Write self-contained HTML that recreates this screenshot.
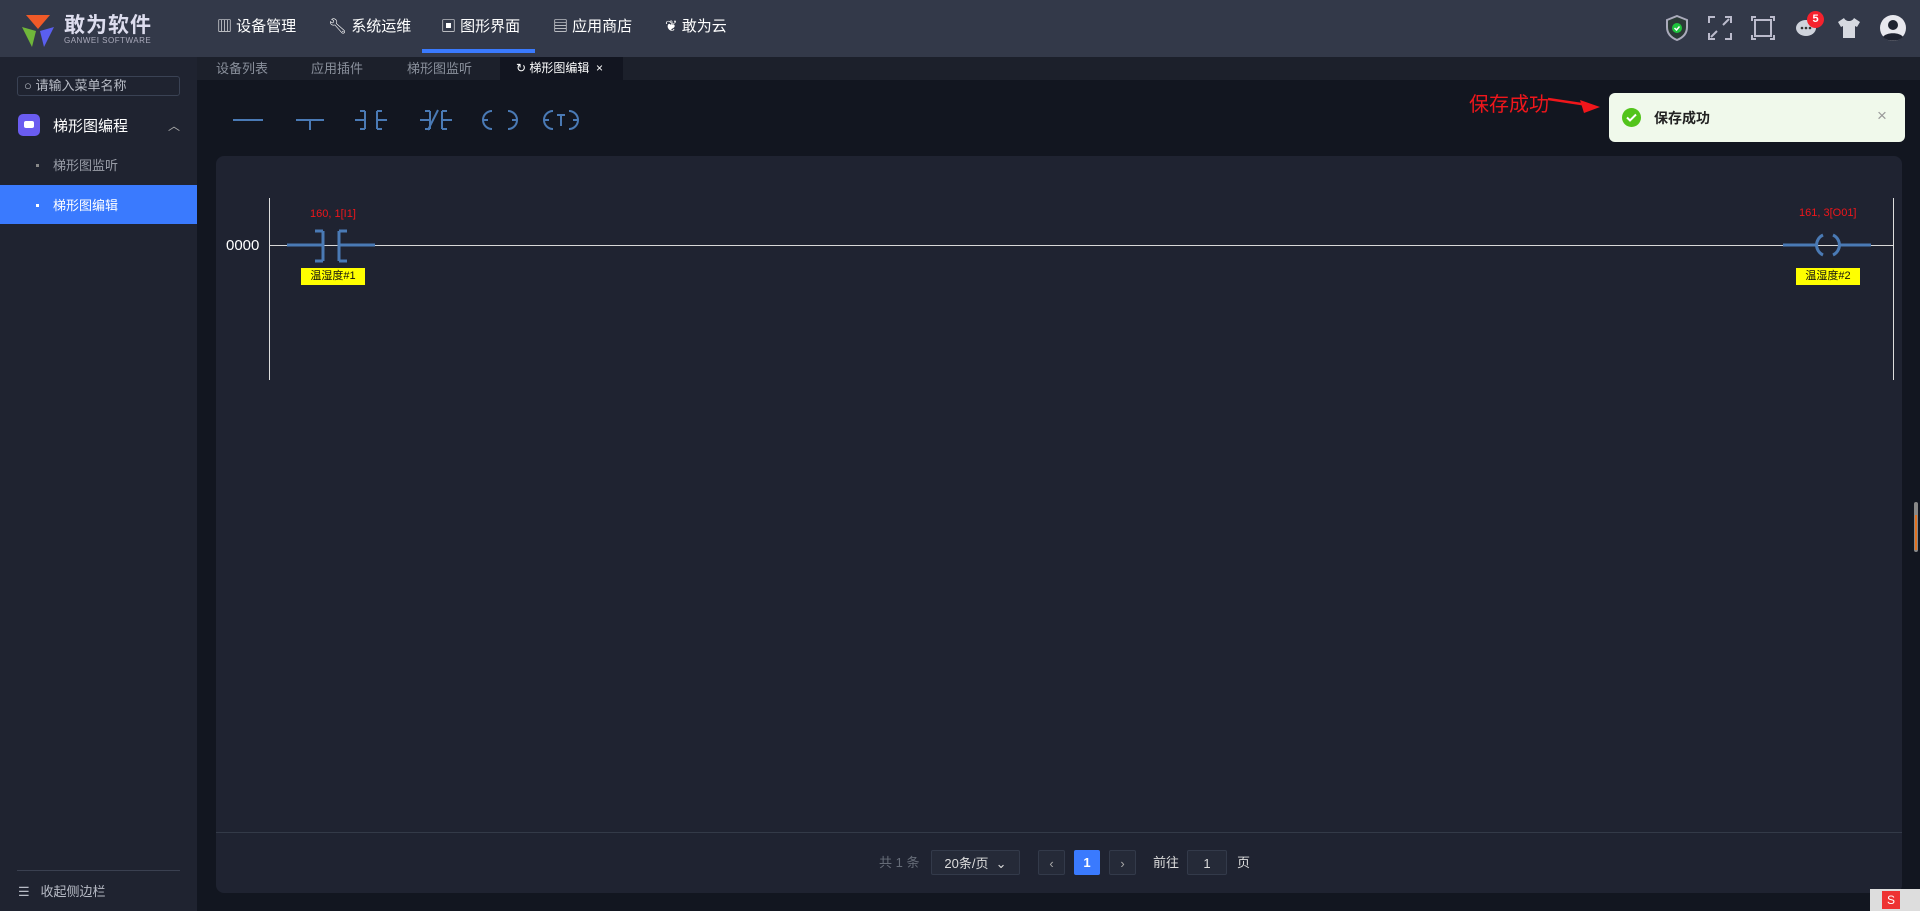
<!DOCTYPE html>
<html><head><meta charset="utf-8"><style>
*{margin:0;padding:0;box-sizing:border-box}
body{width:1920px;height:911px;overflow:hidden;background:#121620;font-family:"Liberation Sans","Noto Sans CJK SC",sans-serif;position:relative;color:#e6e8ee}
.abs{position:absolute}
.top{left:0;top:0;width:1920px;height:57px;background:#333949}
.nav{top:0;height:57px;line-height:53px;font-size:15px;color:#fff}
.side{left:0;top:57px;width:197px;height:854px;background:#1f2330}
.tabs{left:197px;top:57px;width:1723px;height:23px;background:#1c202b}
.tab{top:57px;height:23px;line-height:23px;font-size:13px;color:#8a909c}
.panel{left:216px;top:156px;width:1686px;height:737px;background:#1f2331;border-radius:8px}
.lbl{font-size:11px;color:#f0161b}
.yl{background:#ffff00;color:#111;font-size:11px;text-align:center;height:17px;line-height:17px}
.pg{top:850px;height:25px;line-height:25px;font-size:13px}
.btn{border:1px solid #333a4a;background:#252a38;border-radius:2px;text-align:center;color:#aaa}
</style></head><body>
<div class="abs top"></div>
<svg class="abs" style="left:20px;top:13px" width="36" height="34" viewBox="0 0 36 34"><path d="M6 2h24l-12 14z" fill="#f05a28"/><path d="M2 14l14 4-4 16z" fill="#6fb63a"/><path d="M34 14l-14 4 4 16z" fill="#5a5ff0"/></svg>
<div class="abs" style="left:64px;top:9px;font-size:21px;font-weight:bold;color:#dde;letter-spacing:1px">敢为软件</div>
<div class="abs" style="left:64px;top:36px;font-size:8px;color:#aab;letter-spacing:0.5px">GANWEI SOFTWARE</div>
<div class="abs nav" style="left:217px">▥ 设备管理</div>
<div class="abs nav" style="left:328px">🔧︎ 系统运维</div>
<div class="abs nav" style="left:441px">▣ 图形界面</div>
<div class="abs" style="left:422px;top:49px;width:113px;height:4px;background:#3a7afe"></div>
<div class="abs nav" style="left:553px">▤ 应用商店</div>
<div class="abs nav" style="left:665px">❦ 敢为云</div>
<svg class="abs" style="left:1665px;top:15px" width="24" height="26" viewBox="0 0 24 26"><path d="M12 1l10 4v7c0 7-5 11-10 13C7 23 2 19 2 12V5z" fill="#2b3a36" stroke="#aab" stroke-width="2"/><circle cx="12" cy="13" r="5" fill="#1ec43c"/><path d="M9.5 13l2 2 3-3.5" stroke="#fff" stroke-width="1.5" fill="none"/></svg>
<svg class="abs" style="left:1708px;top:16px" width="24" height="24" viewBox="0 0 24 24" stroke="#bbc" stroke-width="2" fill="none"><path d="M1 7V1h6M17 1h6v6M23 17v6h-6M7 23H1v-6M3 21l6-6M21 3l-6 6"/></svg>
<svg class="abs" style="left:1751px;top:16px" width="24" height="24" viewBox="0 0 24 24" stroke="#bbc" stroke-width="2" fill="none"><rect x="4" y="4" width="16" height="16"/><path d="M1 5V1h4M19 1h4v4M23 19v4h-4M5 23H1v-4"/></svg>
<svg class="abs" style="left:1795px;top:17px" width="24" height="22" viewBox="0 0 24 22"><ellipse cx="11" cy="11" rx="10" ry="8" fill="#cfd3dc"/><circle cx="7" cy="11" r="1.3" fill="#333"/><circle cx="11" cy="11" r="1.3" fill="#333"/><circle cx="15" cy="11" r="1.3" fill="#333"/></svg>
<div class="abs" style="left:1807px;top:11px;width:17px;height:17px;border-radius:50%;background:#f5222d;color:#fff;font-size:11px;text-align:center;line-height:17px;font-weight:bold">5</div>
<svg class="abs" style="left:1837px;top:17px" width="24" height="22" viewBox="0 0 24 22"><path d="M7 1l-6 4 3 5 2-1v12h12V9l2 1 3-5-6-4c-1 2-3 3-5 3S8 3 7 1z" fill="#d6d9e0"/></svg>
<svg class="abs" style="left:1880px;top:15px" width="26" height="26" viewBox="0 0 26 26"><circle cx="13" cy="13" r="13" fill="#e8e8ee"/><circle cx="13" cy="10" r="5" fill="#1f2330"/><path d="M3 22c3-5 17-5 20 0-5 5-15 5-20 0z" fill="#1f2330"/></svg>

<div class="abs side"></div>
<div class="abs" style="left:17px;top:76px;width:163px;height:20px;border:1px solid #3a4254;border-radius:3px;font-size:13px;color:#b8bcc6;line-height:18px;padding-left:6px">○ 请输入菜单名称</div>
<div class="abs" style="left:18px;top:114px;width:22px;height:22px;background:#6a5cf0;border-radius:5px"></div>
<div class="abs" style="left:24px;top:121px;width:10px;height:7px;background:#fff;border-radius:2px"></div>
<div class="abs" style="left:53px;top:115px;font-size:15px;color:#fff">梯形图编程</div>
<div class="abs" style="left:168px;top:117px;font-size:12px;color:#aaa">︿</div>
<div class="abs" style="left:36px;top:164px;width:3px;height:3px;background:#888"></div>
<div class="abs" style="left:53px;top:155px;font-size:13px;color:#9a9ea8">梯形图监听</div>
<div class="abs" style="left:0;top:185px;width:197px;height:39px;background:#3a7afe"></div>
<div class="abs" style="left:36px;top:204px;width:3px;height:3px;background:#fff"></div>
<div class="abs" style="left:53px;top:195px;font-size:13px;color:#fff">梯形图编辑</div>
<div class="abs" style="left:17px;top:870px;width:163px;height:1px;background:#3a4050"></div>
<div class="abs" style="left:18px;top:881px;font-size:13px;color:#b8bcc6">☰&nbsp;&nbsp;&nbsp;收起侧边栏</div>

<div class="abs tabs"></div>
<div class="abs tab" style="left:216px">设备列表</div>
<div class="abs tab" style="left:311px">应用插件</div>
<div class="abs tab" style="left:407px">梯形图监听</div>
<div class="abs tab" style="left:500px;width:123px;background:#121520;color:#fff;padding-left:16px;font-size:12px">↻ 梯形图编辑 &nbsp;×</div>

<svg class="abs" style="left:230px;top:106px" width="360" height="30" viewBox="0 0 360 30" stroke="#4a7ab5" stroke-width="2" fill="none">
<path d="M3 14h30"/><path d="M66 14h28M80 14v10"/>
<path d="M125 14h10M135 5v18M130 5h5M130 23h5M147 5v18M147 5h5M147 23h5M147 14h10"/>
<path d="M190 14h10M200 5v18M195 5h5M195 23h5M212 5v18M212 5h5M212 23h5M212 14h10M198 24l10-20"/>
<path d="M253 14h5M262 5a9 9 0 0 0 0 18M278 5a9 9 0 0 1 0 18M282 14h5"/>
<path d="M315 14h4M323 5a9 9 0 0 0 0 18M339 5a9 9 0 0 1 0 18M343 14h4M327 9h8M331 9v11"/>
</svg>

<div class="abs panel"></div>
<div class="abs" style="left:269px;top:198px;width:1px;height:182px;background:#ddd"></div>
<div class="abs" style="left:1893px;top:198px;width:1px;height:182px;background:#ddd"></div>
<div class="abs" style="left:269px;top:245px;width:1624px;height:1px;background:#d8d8d8"></div>
<div class="abs" style="left:226px;top:237px;font-size:15px;color:#fff">0000</div>
<svg class="abs" style="left:287px;top:228px" width="90" height="36" viewBox="0 0 90 36" stroke="#4a7ab5" stroke-width="3" fill="none"><path d="M0 17h36M36 3v30M28 3h8M28 33h8M52 3v30M52 3h8M52 33h8M52 17h36"/></svg>
<div class="abs lbl" style="left:310px;top:208px">160, 1[I1]</div>
<div class="abs yl" style="left:301px;top:268px;width:64px">温湿度#1</div>
<svg class="abs" style="left:1783px;top:228px" width="90" height="36" viewBox="0 0 90 36" stroke="#4a7ab5" stroke-width="3" fill="none"><path d="M0 17h34M40 7a11 11 0 0 0 0 20M50 7a11 11 0 0 1 0 20M56 17h32"/></svg>
<div class="abs lbl" style="left:1799px;top:207px">161, 3[O01]</div>
<div class="abs yl" style="left:1796px;top:268px;width:64px">温湿度#2</div>

<div class="abs" style="left:216px;top:832px;width:1686px;height:1px;background:#333a48"></div>
<div class="abs pg" style="left:879px;color:#666c78">共 1 条</div>
<div class="abs pg btn" style="left:931px;width:89px;color:#ddd">20条/页 &nbsp;⌄</div>
<div class="abs pg btn" style="left:1038px;width:27px">‹</div>
<div class="abs pg" style="left:1074px;width:26px;background:#3a7afe;color:#fff;text-align:center;font-weight:bold;border-radius:2px">1</div>
<div class="abs pg btn" style="left:1109px;width:27px">›</div>
<div class="abs pg" style="left:1153px;color:#ddd">前往</div>
<div class="abs pg btn" style="left:1187px;width:40px;color:#ddd">1</div>
<div class="abs pg" style="left:1237px;color:#ddd">页</div>

<div class="abs" style="left:1469px;top:88px;font-size:20px;color:#f0161b">保存成功</div>
<svg class="abs" style="left:1548px;top:95px" width="54" height="20" viewBox="0 0 54 20"><path d="M0 4L40 10" stroke="#f0161b" stroke-width="2.5"/><path d="M32 5L52 12 36 18z" fill="#f0161b"/></svg>
<div class="abs" style="left:1609px;top:93px;width:296px;height:49px;background:#f0f9eb;border-radius:6px"></div>
<svg class="abs" style="left:1622px;top:108px" width="19" height="19" viewBox="0 0 19 19"><circle cx="9.5" cy="9.5" r="9.5" fill="#52c41a"/><path d="M5 9.5l3 3 6-6" stroke="#fff" stroke-width="2" fill="none"/></svg>
<div class="abs" style="left:1654px;top:108px;font-size:14px;color:#222;font-weight:bold">保存成功</div>
<div class="abs" style="left:1877px;top:106px;font-size:17px;color:#999">×</div>

<div class="abs" style="left:1914px;top:502px;width:4px;height:50px;background:#888;border-radius:2px"></div>
<div class="abs" style="left:1915px;top:515px;width:2px;height:35px;background:#e07020"></div>
<div class="abs" style="left:1870px;top:889px;width:50px;height:22px;background:#ddd"></div>
<div class="abs" style="left:1882px;top:891px;width:18px;height:18px;background:#e33;color:#fff;font-size:12px;text-align:center;line-height:18px">S</div>
</body></html>
